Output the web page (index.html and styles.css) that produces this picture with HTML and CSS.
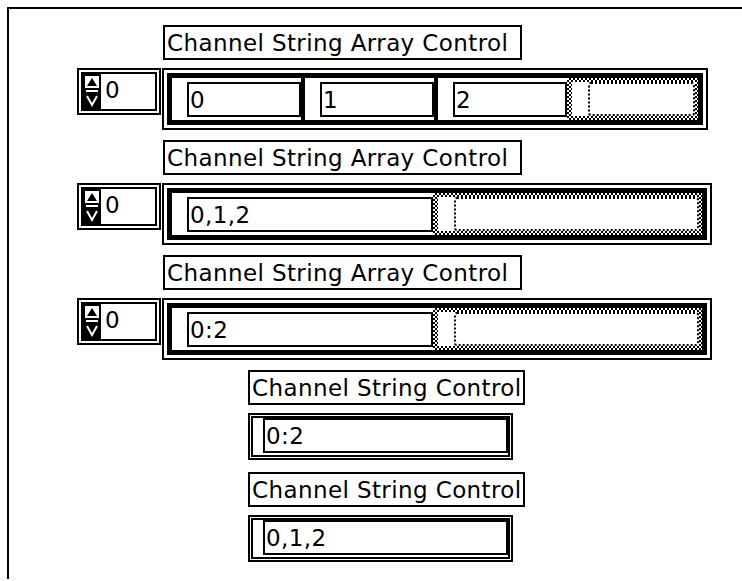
FILE: index.html
```html
<!DOCTYPE html>
<html lang="en">
<head>
  <meta charset="UTF-8" />
  <title>Channel String Controls</title>
  <link rel="stylesheet" href="styles.css">
</head>
<body>
  <div class="panel">

    <div class="group">
      <div class="label label-array">Channel String Array Control</div>
      <div class="array-row">
        <div class="index">
          <svg class="spin" width="18" height="35" viewBox="0 0 18 35">
            <rect width="18" height="35" fill="#000"/>
            <rect x="2" y="2" width="14" height="12" fill="#fff"/>
            <path d="M9 4 L14 12 H4 Z" fill="#000"/>
            <rect x="3" y="16" width="12" height="2" fill="#fff"/>
            <path d="M4 22 L9 31 L14 22" fill="none" stroke="#fff" stroke-width="2"/>
          </svg>
          <div class="index-value">0</div>
        </div>
        <div class="array">
          <div class="array-body">
            <div class="cell"><div class="field field-sm">0</div></div>
            <div class="cell"><div class="field field-sm">1</div></div>
            <div class="cell"><div class="field field-sm">2</div></div>
            <div class="cell empty empty-sm"><div class="empty-body"><div class="ghost"></div></div></div>
          </div>
        </div>
      </div>
    </div>

    <div class="group">
      <div class="label label-array">Channel String Array Control</div>
      <div class="array-row">
        <div class="index">
          <svg class="spin" width="18" height="35" viewBox="0 0 18 35">
            <rect width="18" height="35" fill="#000"/>
            <rect x="2" y="2" width="14" height="12" fill="#fff"/>
            <path d="M9 4 L14 12 H4 Z" fill="#000"/>
            <rect x="3" y="16" width="12" height="2" fill="#fff"/>
            <path d="M4 22 L9 31 L14 22" fill="none" stroke="#fff" stroke-width="2"/>
          </svg>
          <div class="index-value">0</div>
        </div>
        <div class="array">
          <div class="array-body">
            <div class="cell"><div class="field field-lg">0,1,2</div></div>
            <div class="cell empty empty-lg"><div class="empty-body"><div class="ghost"></div></div></div>
          </div>
        </div>
      </div>
    </div>

    <div class="group">
      <div class="label label-array">Channel String Array Control</div>
      <div class="array-row">
        <div class="index">
          <svg class="spin" width="18" height="35" viewBox="0 0 18 35">
            <rect width="18" height="35" fill="#000"/>
            <rect x="2" y="2" width="14" height="12" fill="#fff"/>
            <path d="M9 4 L14 12 H4 Z" fill="#000"/>
            <rect x="3" y="16" width="12" height="2" fill="#fff"/>
            <path d="M4 22 L9 31 L14 22" fill="none" stroke="#fff" stroke-width="2"/>
          </svg>
          <div class="index-value">0</div>
        </div>
        <div class="array">
          <div class="array-body">
            <div class="cell"><div class="field field-lg">0:2</div></div>
            <div class="cell empty empty-lg"><div class="empty-body"><div class="ghost"></div></div></div>
          </div>
        </div>
      </div>
    </div>

    <div class="group group-string">
      <div class="label label-string">Channel String Control</div>
      <div class="string-ctl"><div class="field">0:2</div></div>
    </div>

    <div class="group group-string">
      <div class="label label-string">Channel String Control</div>
      <div class="string-ctl"><div class="field">0,1,2</div></div>
    </div>

  </div>
</body>
</html>
```

FILE: styles.css
```css
body {
  margin: 0;
  background: #fff;
  color: #000;
  font-family: "DejaVu Sans", sans-serif;
  font-size: 23px;
  letter-spacing: 0.4px;
}
.panel {
  margin: 7px 0 0 7px;
  border-top: 2px solid #000;
  border-left: 2px solid #000;
  padding: 16px 0 0 68px;
  height: calc(100vh - 9px);
  box-sizing: border-box;
  overflow: hidden;
}
.group { margin-bottom: 10px; }
.group-string { margin: 5px 0 0 171px; }
.group-string + .group-string { margin-top: 12px; }

.label {
  height: 35px;
  box-sizing: border-box;
  border: 2px solid #000;
  padding: 2px 0 0 2px;
  line-height: 29px;
  white-space: nowrap;
  overflow: hidden;
  margin-bottom: 8px;
}
.label-array {
  width: 359px;
  margin-left: 86px;
}
.label-string { width: 277px; }

.array-row {
  display: flex;
  align-items: flex-start;
  gap: 1px;
}
.index {
  display: flex;
  width: 84px;
  box-sizing: border-box;
  border: 6px double #000;
}
.spin { display: block; flex: none; }
.index-value {
  flex: 1;
  height: 35px;
  box-sizing: border-box;
  padding: 2px 0 0 4px;
  line-height: 29px;
}

.array {
  border: 2px solid #000;
  padding: 3px;
}
.array-body {
  display: flex;
  border: 5px solid #000;
}
.cell {
  padding: 4px 0 3px 15px;
}
.cell + .cell { border-left: 4px solid #000; }
.cell.empty {
  border-left: none;
  height: 42px;
  box-sizing: border-box;
  padding: 4px 3px 4px 5px;
  background: repeating-conic-gradient(#000 0 25%, #fff 0 50%) 0 0 / 4px 4px;
}
.empty-sm { width: 131px; }
.empty-lg { width: 269px; }
.empty-body {
  height: 100%;
  box-sizing: border-box;
  background: #fff;
  padding-left: 16px;
}
.ghost {
  height: 100%;
  box-sizing: border-box;
  border: 2px dotted #000;
  border-radius: 3px;
}

.field {
  height: 35px;
  box-sizing: border-box;
  border: 2px solid #000;
  padding: 2px 0 0 1px;
  line-height: 29px;
  white-space: nowrap;
  overflow: hidden;
  background: #fff;
}
.field-sm { width: 114px; }
.field-lg { width: 246px; }

.string-ctl {
  width: 265px;
  box-sizing: border-box;
  border: 5px double #000;
  padding: 0 0 2px 10px;
}
```
